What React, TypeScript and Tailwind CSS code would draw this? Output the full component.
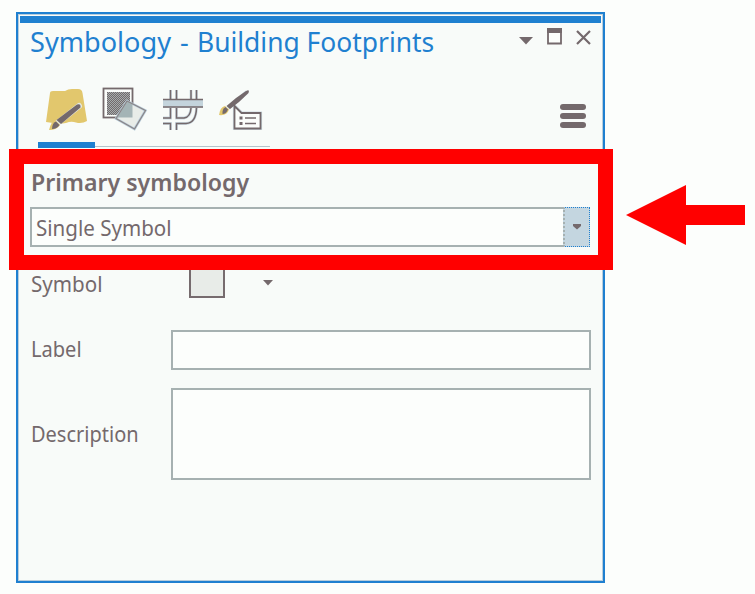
import React from "react";

type FitProps = { children: React.ReactNode; className: string };

const Text = ({ children, className }: FitProps) => (
  <span className={`inline-block origin-left whitespace-nowrap ${className}`}>{children}</span>
);

const FillIcon = () => (
  <svg width="44" height="46" viewBox="0 0 44 46" fill="none">
    <path d="M5 6 Q5 4 8 4 H20 Q23 2 27 2 H33 Q37 2 37.500 6 L42 34 Q37 37 31 35.500 Q26 34 21 36 Q14 37.500 8 36 L1 35 Z" fill="#e2c76d" />
    <path d="M10 38 L34 19" stroke="#e4e8e2" strokeWidth="6" strokeLinecap="round" />
    <path d="M32 17.500 Q36 16 35.500 20.500 L16 37 L11.500 33 Z" fill="#74696c" />
    <path d="M4 43 Q6 34 11 34 L15 38 Q12 43 4 43Z" fill="#e2c76d" />
    <path d="M7 42 Q7 36 11 34.500 L14.500 38 Q12 42 7 42Z" fill="#74696c" />
  </svg>
);

const LayersIcon = () => (
  <svg width="46" height="46" viewBox="0 0 46 46" fill="none">
    <defs>
      <pattern id="dots" width="2" height="2" patternUnits="userSpaceOnUse">
        <rect width="2" height="2" fill="#a4aeae" />
        <rect width="1" height="1" fill="#74696c" />
        <rect x="1" y="1" width="1" height="1" fill="#74696c" />
      </pattern>
    </defs>
    <rect x="1.500" y="1.500" width="29" height="29" fill="#fbfdfb" stroke="#74696c" strokeWidth="1.800" />
    <rect x="5" y="5" width="23" height="23" fill="url(#dots)" />
    <path d="M25 14 L43.500 23.500 L32.500 42 L14 31.500 Z" fill="#e8ece8" stroke="#b8cddb" strokeWidth="2.500" />
    <path d="M25 14 L30.500 17 V30.500 H15 Z" fill="#a4b4b6" />
    <path d="M25 14 L43.500 23.500 L32.500 42 L14 31.500 Z" stroke="#8a8486" strokeWidth="1.200" />
  </svg>
);

const CrossingIcon = () => (
  <svg width="42" height="42" viewBox="0 0 42 42" fill="none">
    <g stroke="#ccdae1" strokeWidth="2.800">
      <path d="M8.500 1V11M14.500 1V11M29 1V11M34.500 1V11M8.500 19V29H1M14.500 19V29H22Q28.500 28 29 19M34.500 19Q34 34 24 34.500H14.500V41M8.500 41V34.500H1" />
    </g>
    <g stroke="#74696c" strokeWidth="1.500">
      <path d="M8.500 1V11M14.500 1V11M29 1V11M34.500 1V11M8.500 19V29H1M14.500 19V29H22Q28.500 28 29 19M34.500 19Q34 34 24 34.500H14.500V41M8.500 41V34.500H1" />
    </g>
    <rect x="1" y="10.500" width="40" height="8" fill="#c4d4dc" />
    <path d="M1 10.500H41M1 18H41" stroke="#74696c" strokeWidth="1.500" />
  </svg>
);

const LabelIcon = () => (
  <svg width="44" height="42" viewBox="0 0 44 42" fill="none">
    <path d="M15.500 17 L22.500 24 H41.500 V39.500 H15.500 Z" fill="#fbfdfb" stroke="#ccdae1" strokeWidth="3.200" />
    <path d="M9 19 L28 3" stroke="#ccdae1" strokeWidth="4" />
    <path d="M27 2 Q31 0 29.500 4 L20 13 L11 20 L7.500 17 L17 9 Z" fill="#74696c" />
    <path d="M0 26 Q1 18 6 17 L10 20.500 Q8 27 0 26Z" fill="#e2c76d" />
    <path d="M3.500 25 Q3 20 6.500 18 L9 20.500 Q7 25 3.500 25Z" fill="#74696c" />
    <path d="M15.500 17 L22.500 24 H41.500 V39.500 H15.500 Z" fill="#fbfdfb" stroke="#74696c" strokeWidth="1.800" />
    <path d="M26 29 H37 M26 34.500 H37" stroke="#74696c" strokeWidth="1.600" />
    <path d="M20.500 27.500h3v3h-3zM20.500 33h3v3h-3z" fill="#74696c" />
  </svg>
);

const Field = ({ className }: { className: string }) => (
  <div className={`w-[420px] border-2 border-[#a6b1b1] bg-[#fcfefc] ${className}`} />
);

export default function App() {
  return (
    <div className="relative h-[594px] w-[755px] overflow-hidden bg-[#fcfefc] pt-3 pl-4 font-['Noto_Sans',sans-serif] text-[#74696c]">
      <section className="h-[571px] w-[589px] border-2 border-[#1f80d0] bg-[#f8fbf9]">
        <div className="flex h-full flex-col border border-[#b8cddb]">
          <div className="mx-px mt-px h-[7px] shrink-0 bg-[#1f80d0]" />
          <header className="flex h-[48px] shrink-0 items-start justify-between pr-[11px] pl-[11px]">
            <h1 className="flex w-[410px] pt-px text-[28px] leading-[34px] whitespace-pre text-[#1f80d0]">
              <span className="w-[167px] shrink-0"><Text className="scale-x-[0.968] [word-spacing:2px]">Symbology - </Text></span>
              <Text className="scale-x-[0.943]">Building Footprints</Text>
            </h1>
            <div className="flex items-start">
              <svg className="mt-[14px] mr-[14px]" width="14" height="8" viewBox="0 0 14 8"><path d="M0 0H14L7 7.500Z" fill="#74696c" /></svg>
              <svg className="mt-[5px] mr-[14px]" width="15" height="17" viewBox="0 0 15 17"><path d="M1 1H14V15.500H1Z" fill="#fcfefc" stroke="#74696c" strokeWidth="1.800" /><path d="M0 0H15V5H0Z" fill="#74696c" /></svg>
              <svg className="mt-[7px]" width="15" height="15" viewBox="0 0 15 15"><path d="M1 1L14 14M14 1L1 14" stroke="#74696c" strokeWidth="2.200" /></svg>
            </div>
          </header>

          <div className="flex h-[77px] shrink-0 items-start justify-between pr-[16px] pl-[19px]">
            <nav className="flex h-[77px] w-[232px] flex-col">
              <div className="flex h-[71px] items-start">
                <div className="ml-[7px] w-[57px] pt-[16px]"><FillIcon /></div>
                <div className="w-[60px] pt-[16px]"><LayersIcon /></div>
                <div className="w-[57px] pt-[18px]"><CrossingIcon /></div>
                <div className="pt-[18px]"><LabelIcon /></div>
              </div>
              <div className="flex h-1.5 items-center">
                <div className="h-1.5 w-[57px] bg-[#1f80d0]" />
                <div className="mt-0.5 h-px flex-1 bg-[#b4c4cc]" />
              </div>
            </nav>
            <button className="mt-[33px] flex flex-col gap-[3px]" aria-label="Menu">
              <span className="h-1.5 w-[26px] rounded-sm bg-[#74696c]" />
              <span className="h-1.5 w-[26px] rounded-sm bg-[#74696c]" />
              <span className="h-1.5 w-[26px] rounded-sm bg-[#74696c]" />
            </button>
          </div>

          <main className="flex flex-col pr-[11px] pl-[11px] text-[21px]">
            <h2 className="mt-[18px] h-[41px] pl-px text-[23px] leading-[32px] font-semibold">
              <Text className="scale-x-[1.005]">Primary symbology</Text>
            </h2>
            <div className="flex h-10 w-[560px] border-2 border-[#a6b1b1] bg-[#fcfefc]">
              <div className="flex-1 pl-1 leading-[38px]"><Text className="scale-x-[0.979]">Single Symbol</Text></div>
              <div className="-my-0.5 -mr-0.5 flex w-[27px] items-center justify-center border border-l-2 border-dotted border-[#1f80d0] border-l-[#a6b1b1] bg-[#c4d6e0]">
                <svg width="8" height="6" viewBox="0 0 8 6"><path d="M0 0H8V2L4 5.500L0 2Z" fill="#74696c" /></svg>
              </div>
            </div>
            <div className="mt-[21px] flex h-[34px] items-center">
              <div className="w-[159px] pl-px"><Text className="scale-x-[0.98]">Symbol</Text></div>
              <div className="h-[34px] w-[36px] -translate-y-[4px] border-2 border-[#766b6e] bg-[#e8ece8]" />
              <svg className="ml-[38px] -translate-y-0.5" width="10" height="6" viewBox="0 0 10 6"><path d="M0 0H10L5 5.500Z" fill="#74696c" /></svg>
            </div>
            <div className="mt-[28px] flex h-10 items-center">
              <div className="w-[141px] shrink-0 pl-px"><Text className="scale-x-[0.955]">Label</Text></div>
              <Field className="h-10" />
            </div>
            <div className="mt-[18px] flex h-[92px] items-center">
              <div className="w-[141px] shrink-0 pt-0.5 pl-px"><Text className="scale-x-[0.952]">Description</Text></div>
              <Field className="h-[92px]" />
            </div>
          </main>
        </div>
      </section>

      <div className="absolute top-[149px] left-[9px] h-[121px] w-[604px] border-[15px] border-[#ff0000]" />
      <svg className="absolute top-[185px] left-[626px]" width="119" height="60" viewBox="0 0 119 60">
        <path d="M0 30L60 0V20H119V40H60V60Z" fill="#ff0000" />
      </svg>
    </div>
  );
}
